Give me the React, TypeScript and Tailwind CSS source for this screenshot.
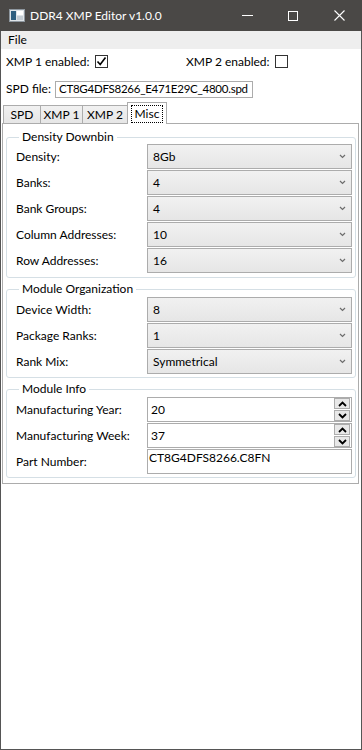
import React from "react";

const font = { fontFamily: 'Lato, "Noto Sans", sans-serif' };

function Chevron() {
  return (
    <svg width="7" height="5" viewBox="0 0 7 5" className="shrink-0">
      <polyline points="1,1 3.5,3.5 6,1" fill="none" stroke="#6d6d6d" strokeWidth="1.2" />
    </svg>
  );
}

function Combo({ value }: { value: string }) {
  return (
    <div className="w-[205px] h-[25px] mb-[1px] flex items-center justify-between pl-[5px] pr-[5px] border border-[#acacac] bg-linear-to-b from-[#f1f1f1] to-[#e6e6e6] text-black">
      <span>{value}</span>
      <Chevron />
    </div>
  );
}

function SpinArrow({ up }: { up?: boolean }) {
  return (
    <svg width="9" height="6" viewBox="0 0 9 6">
      <polyline
        points={up ? "1,5 4.5,1.5 8,5" : "1,1 4.5,4.5 8,1"}
        fill="none"
        stroke="#000"
        strokeWidth="1.8"
      />
    </svg>
  );
}

function Spin({ value }: { value: string }) {
  return (
    <div className="w-[205px] h-[25px] mb-[1px] flex items-center border border-[#acacac] bg-white">
      <span className="pl-[3px] flex-1">{value}</span>
      <div className="flex flex-col gap-[1px] mr-[1px]">
        <div className="w-[16px] h-[11px] border border-[#acacac] bg-[#e8e8e8] flex items-center justify-center">
          <SpinArrow up />
        </div>
        <div className="w-[16px] h-[11px] border border-[#acacac] bg-[#e8e8e8] flex items-center justify-center">
          <SpinArrow />
        </div>
      </div>
    </div>
  );
}

function Row({ label, children }: { label: string; children: React.ReactNode }) {
  return (
    <div className="flex items-start">
      <div className="w-[131px] h-[25px] flex items-center">{label}</div>
      {children}
    </div>
  );
}

function Group({
  title,
  className,
  children,
}: {
  title: string;
  className: string;
  children: React.ReactNode;
}) {
  return (
    <fieldset className={`border border-[#d5dfe5] rounded-[3px] pl-[9px] ${className}`}>
      <legend className="ml-[3px] px-[3px] leading-[14px]">{title}</legend>
      {children}
    </fieldset>
  );
}

export default function App() {
  return (
    <div
      style={font}
      className="w-[362px] h-[750px] flex flex-col bg-white text-[12px] text-black border-x border-b border-[#555555]"
    >
      {/* Title bar */}
      <div className="h-[31px] -mx-[1px] bg-[#4a4846] flex items-center text-white">
        <svg width="16" height="13" viewBox="0 0 16 13" className="ml-[9px]">
          <rect x="0.5" y="0.5" width="15" height="12" fill="#dfe4e8" stroke="#8e979f" />
          <rect x="2" y="2" width="5" height="9" fill="#2f5f7f" />
          <rect x="8" y="2" width="6" height="4" fill="#ffffff" />
          <rect x="8" y="7" width="6" height="4" fill="#c3ccd3" />
        </svg>
        <span className="ml-[5px] flex-1">DDR4 XMP Editor v1.0.0</span>
        <div className="w-[46px] h-[31px] flex items-center justify-center">
          <div className="w-[11px] h-[1px] bg-white" />
        </div>
        <div className="w-[46px] h-[31px] flex items-center justify-center">
          <div className="w-[10px] h-[10px] border border-white" />
        </div>
        <div className="w-[46px] h-[31px] flex items-center justify-center">
          <svg width="11" height="11" viewBox="0 0 11 11">
            <path d="M0.5 0.5 L10.5 10.5 M10.5 0.5 L0.5 10.5" stroke="#fff" strokeWidth="1.1" />
          </svg>
        </div>
      </div>

      {/* Menu */}
      <div className="h-[18px] bg-[#eeeeee] flex items-center pl-[7px]">File</div>

      {/* XMP checkboxes */}
      <div className="h-[23px] flex items-center pl-[5px] mt-[1px]">
        <div className="w-[180px] flex items-center gap-[5px]">
          <span>XMP 1 enabled:</span>
          <div className="w-[13px] h-[13px] border border-[#333333] flex items-center justify-center">
            <svg width="11" height="11" viewBox="0 0 11 11">
              <polyline points="1.5,5.5 4.2,8.5 9.5,1.5" fill="none" stroke="#000" strokeWidth="1.6" />
            </svg>
          </div>
        </div>
        <div className="flex items-center gap-[5px]">
          <span>XMP 2 enabled:</span>
          <div className="w-[13px] h-[13px] border border-[#333333]" />
        </div>
      </div>

      {/* SPD file */}
      <div className="h-[22px] flex items-center pl-[5px] mt-[5px]">
        <span>SPD file:</span>
        <div className="ml-[4px] w-[198px] h-[17px] border border-[#acacac] flex items-center pl-[3px] overflow-hidden whitespace-nowrap text-[11.5px] tracking-[-0.25px]">
          CT8G4DFS8266_E471E29C_4800.spd
        </div>
      </div>

      {/* Tabs */}
      <div className="h-[21px] mt-[2px] flex items-end pl-[2px]">
        <div className="w-[37px] h-[18px] border-l border-t border-[#acacac] bg-linear-to-b from-[#f1f1f1] to-[#e6e6e6] flex items-center justify-center">
          SPD
        </div>
        <div className="w-[42px] h-[18px] border-l border-t border-[#acacac] bg-linear-to-b from-[#f1f1f1] to-[#e6e6e6] flex items-center justify-center">
          XMP 1
        </div>
        <div className="w-[45px] h-[18px] border-l border-t border-[#acacac] bg-linear-to-b from-[#f1f1f1] to-[#e6e6e6] flex items-center justify-center">
          XMP 2
        </div>
        <div className="relative z-10 -mb-[1px] w-[40px] h-[22px] border-l border-t border-r border-[#acacac] bg-white flex items-center justify-center">
          <span className="border border-dotted border-black px-[3px] leading-[16px]">Misc</span>
        </div>
      </div>

      {/* Tab panel */}
      <div className="ml-[1px] w-[357px] border border-[#acacac] pl-[3px] pb-[5px]">
        <Group title="Density Downbin" className="mt-[6px] w-[350px] pb-[3px]">
          <Row label="Density:">
            <Combo value="8Gb" />
          </Row>
          <Row label="Banks:">
            <Combo value="4" />
          </Row>
          <Row label="Bank Groups:">
            <Combo value="4" />
          </Row>
          <Row label="Column Addresses:">
            <Combo value="10" />
          </Row>
          <Row label="Row Addresses:">
            <Combo value="16" />
          </Row>
        </Group>

        <Group title="Module Organization" className="mt-[4px] w-[350px] pt-[1px] pb-[2px]">
          <Row label="Device Width:">
            <Combo value="8" />
          </Row>
          <Row label="Package Ranks:">
            <Combo value="1" />
          </Row>
          <Row label="Rank Mix:">
            <Combo value="Symmetrical" />
          </Row>
        </Group>

        <Group title="Module Info" className="mt-[4px] w-[350px] pt-[1px] pb-[2px]">
          <Row label="Manufacturing Year:">
            <Spin value="20" />
          </Row>
          <Row label="Manufacturing Week:">
            <Spin value="37" />
          </Row>
          <Row label="Part Number:">
            <div className="w-[205px] h-[25px] mb-[1px] border border-[#acacac] bg-white pl-[1px] leading-[15px]">
              CT8G4DFS8266.C8FN
            </div>
          </Row>
        </Group>
      </div>
    </div>
  );
}
